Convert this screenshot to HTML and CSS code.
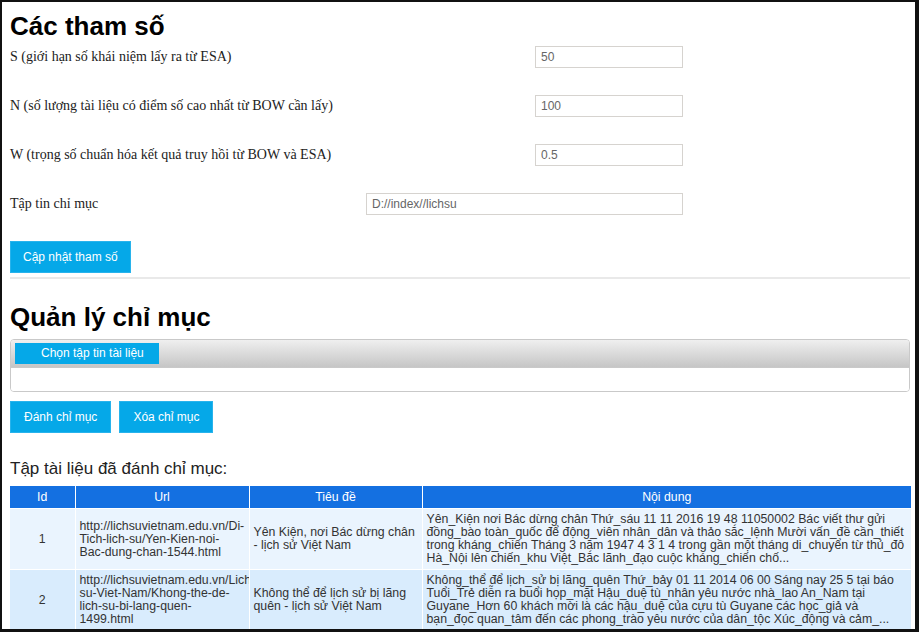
FILE: index.html
```html
<!DOCTYPE html>
<html lang="vi">
<head>
<meta charset="utf-8">
<title>Các tham số</title>
<link rel="stylesheet" href="styles.css">
</head>
<body>
<div class="frame">
  <h1 class="title">Các tham số</h1>
  <div class="params">
    <div class="prow"><span class="plabel">S (giới hạn số khái niệm lấy ra từ ESA)</span><input class="pinput" type="text" value="50"></div>
    <div class="prow"><span class="plabel">N (số lượng tài liệu có điểm số cao nhất từ BOW cần lấy)</span><input class="pinput" type="text" value="100"></div>
    <div class="prow"><span class="plabel">W (trọng số chuẩn hóa kết quả truy hồi từ BOW và ESA)</span><input class="pinput" type="text" value="0.5"></div>
    <div class="prow"><span class="plabel">Tập tin chỉ mục</span><input class="pinput wide" type="text" value="D://index//lichsu"></div>
  </div>
  <button class="btn update">Cập nhật tham số</button>
  <div class="rule"></div>
  <h1 class="title second">Quản lý chỉ mục</h1>
  <div class="uploader">
    <div class="uphead"><span class="btn pick">Chọn tập tin tài liệu</span></div>
    <div class="upbody"></div>
  </div>
  <div class="actions">
    <button class="btn">Đánh chỉ mục</button>
    <button class="btn">Xóa chỉ mục</button>
  </div>
  <h3 class="subtitle">Tập tài liệu đã đánh chỉ mục:</h3>
  <table class="docs">
    <colgroup><col class="c-id"><col class="c-url"><col class="c-title"><col class="c-body"></colgroup>
    <thead>
      <tr><th>Id</th><th>Url</th><th>Tiêu đề</th><th>Nội dung</th></tr>
    </thead>
    <tbody>
      <tr class="odd">
        <td class="id">1</td>
        <td class="url">http://lichsuvietnam.edu.vn/Di-Tich-lich-su/Yen-Kien-noi-Bac-dung-chan-1544.html</td>
        <td>Yên Kiện, nơi Bác dừng chân - lịch sử Việt Nam</td>
        <td>Yên_Kiện nơi Bác dừng chân Thứ_sáu 11 11 2016 19 48 11050002 Bác viết thư gửi đồng_bào toàn_quốc để động_viên nhân_dân và thảo sắc_lệnh Mười vấn_đề cần_thiết trong kháng_chiến Tháng 3 năm 1947 4 3 1 4 trong gần một tháng di_chuyển từ thủ_đô Hà_Nội lên chiến_khu Việt_Bắc lãnh_đạo cuộc kháng_chiến chố...</td>
      </tr>
      <tr class="even">
        <td class="id">2</td>
        <td class="url">http://lichsuvietnam.edu.vn/Lich-su-Viet-Nam/Khong-the-de-lich-su-bi-lang-quen-1499.html</td>
        <td>Không thể để lịch sử bị lãng quên - lịch sử Việt Nam</td>
        <td>Không_thể để lịch_sử bị lãng_quên Thứ_bảy 01 11 2014 06 00 Sáng nay 25 5 tại báo Tuổi_Trẻ diễn ra buổi họp_mặt Hậu_duệ tù_nhân yêu nước nhà_lao An_Nam tại Guyane_Hơn 60 khách mời là các hậu_duệ của cựu tù Guyane các học_giả và bạn_đọc quan_tâm đến các phong_trào yêu nước của dân_tộc Xúc_động và cảm_...</td>
      </tr>
    </tbody>
  </table>
</div>
</body>
</html>
```
FILE: styles.css
```css
html, body {
  margin: 0;
  padding: 0;
  background: #fff;
}
.frame {
  box-sizing: border-box;
  width: 919px;
  height: 632px;
  overflow: hidden;
  border-top: 2px solid #111;
  border-left: 2px solid #111;
  border-right: 4px solid #111;
  border-bottom: 3px solid #111;
  padding: 8px 5px 0 8px;
  font-family: "Liberation Serif", "Times New Roman", serif;
  color: #222;
}
.title {
  font-family: "Liberation Sans", Arial, sans-serif;
  font-weight: bold;
  font-size: 26px;
  line-height: 32px;
  margin: 0;
  color: #000;
}
.title.second {
  margin-top: 22px;
}
.params {
  width: 673px;
  margin-top: 4px;
}
.prow {
  display: flex;
  align-items: center;
  justify-content: space-between;
  height: 22px;
  margin-bottom: 27px;
}
.plabel {
  font-size: 14px;
}
.pinput {
  box-sizing: border-box;
  width: 148px;
  height: 22px;
  border: 1px solid #d6d3cf;
  padding: 0 5px;
  font-family: "Liberation Sans", Arial, sans-serif;
  font-size: 12px;
  color: #666;
  background: #fff;
  outline: none;
}
.pinput.wide {
  width: 317px;
}
.btn {
  display: inline-block;
  box-sizing: border-box;
  height: 32px;
  padding: 0 13px;
  border: 1px solid #28b3ec;
  background: #05a8e8;
  color: #fff;
  font-family: "Liberation Sans", Arial, sans-serif;
  font-size: 12px;
  line-height: 30px;
  cursor: pointer;
}
.update {
  margin-top: -1px;
  padding: 0 12px;
}
.rule {
  height: 2px;
  background: #e9e9e9;
  margin-top: 4px;
}
.uploader {
  margin-top: 6px;
  border: 1px solid #c9c9c9;
  border-radius: 4px;
  overflow: hidden;
}
.uphead {
  height: 28px;
  box-sizing: border-box;
  padding: 3px 4px;
  background: linear-gradient(#efefef, #c6c6c6);
  border-bottom: 1px solid #c9c9c9;
}
.btn.pick {
  height: 21px;
  line-height: 21px;
  padding: 0 0 0 26px;
  width: 144px;
  border: none;
  font-size: 12px;
}
.upbody {
  height: 23px;
  background: #fff;
}
.actions {
  display: flex;
  gap: 8px;
  margin-top: 9px;
}
.subtitle {
  font-family: "Liberation Sans", Arial, sans-serif;
  font-weight: normal;
  font-size: 17px;
  line-height: 20px;
  margin: 26px 0 7px;
  color: #222;
}
.docs {
  width: 901px;
  border-collapse: collapse;
  table-layout: fixed;
  font-family: "Liberation Sans", Arial, sans-serif;
  font-size: 12.3px;
  color: #333;
}
.c-id { width: 65px; }
.c-url { width: 174px; }
.c-title { width: 173px; }
.c-body { width: 489px; }
.docs th {
  background: #1470e1;
  color: #fff;
  font-weight: normal;
  height: 22px;
  padding: 0 4px;
  border: 1px solid #fff;
  border-top: none;
}
.docs td {
  padding: 4px 4px 4px 4px;
  border: 1px solid #fff;
  line-height: 13px;
  vertical-align: middle;
  overflow: hidden;
}
.docs td.url {
  padding-right: 5px;
}
.docs td.id {
  text-align: center;
}
.docs tr.odd td {
  background: #eaf4fe;
}
.docs tr.even td {
  background: #d9ecfd;
}
.docs th:first-child, .docs td:first-child { border-left: none; }
.docs th:last-child, .docs td:last-child { border-right: none; }
```
